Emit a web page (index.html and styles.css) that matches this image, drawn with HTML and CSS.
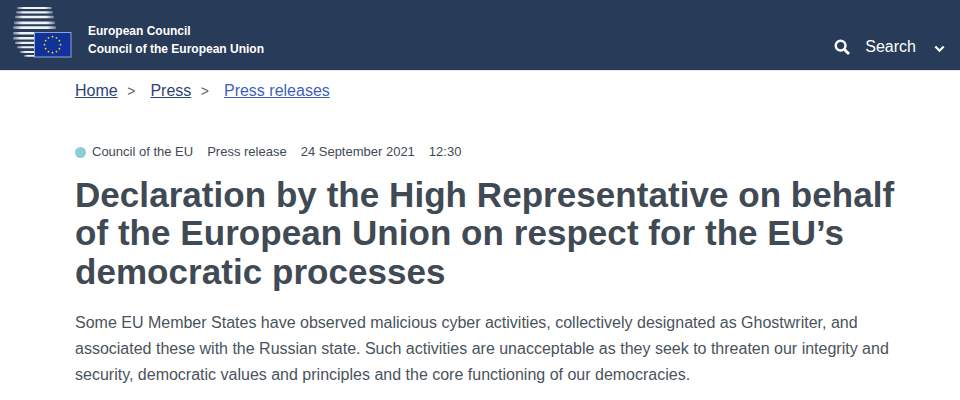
FILE: index.html
```html
<!DOCTYPE html>
<html lang="en">
<head>
    <meta charset="UTF-8">
    <meta name="viewport" content="width=device-width, initial-scale=1.0">
    <title>Declaration by the High Representative</title>
    <link rel="stylesheet" href="styles.css">
</head>
<body>

    <header class="site-header">
        <div class="brand">
            <svg class="brand-logo" width="75" height="60" viewBox="0 0 75 60">
                <defs>
                    <linearGradient id="stripe">
                        <stop offset="0" stop-color="#eef1f5" stop-opacity="0.35"/>
                        <stop offset="0.2" stop-color="#eef1f5"/>
                        <stop offset="0.8" stop-color="#eef1f5"/>
                        <stop offset="1" stop-color="#eef1f5" stop-opacity="0.35"/>
                    </linearGradient>
                    <linearGradient id="stripe-left">
                        <stop offset="0" stop-color="#eef1f5" stop-opacity="0.4"/>
                        <stop offset="0.35" stop-color="#eef1f5"/>
                    </linearGradient>
                </defs>
                <g fill="url(#stripe)">
                    <rect x="17" y="7" width="35" height="2" rx="1"/>
                    <rect x="16" y="11.2" width="37" height="2.2" rx="1"/>
                    <rect x="15" y="15.8" width="39" height="2.4" rx="1"/>
                    <rect x="14" y="21.6" width="41" height="2.6" rx="1"/>
                    <rect x="13" y="26.2" width="43" height="2.8" rx="1"/>
                </g>
                <g fill="url(#stripe-left)">
                    <rect x="13" y="32" width="22" height="2.4" rx="1"/>
                    <rect x="13" y="37" width="22" height="2.4" rx="1"/>
                    <rect x="15" y="41.8" width="20" height="2.2" rx="1"/>
                    <rect x="17" y="46.2" width="18" height="2" rx="1"/>
                    <rect x="20" y="51" width="15" height="2" rx="1"/>
                    <rect x="24" y="55" width="11" height="1.8" rx="0.9"/>
                </g>
                <rect x="34.5" y="32.5" width="36.5" height="24.5" fill="#10329a" stroke="#8fa6d4" stroke-width="1"/>
                <g fill="#f4d90a">
                    <circle cx="52.5" cy="36.7" r="0.9"/>
                    <circle cx="56.5" cy="37.8" r="0.9"/>
                    <circle cx="59.4" cy="40.7" r="0.9"/>
                    <circle cx="60.5" cy="44.7" r="0.9"/>
                    <circle cx="59.4" cy="48.7" r="0.9"/>
                    <circle cx="56.5" cy="51.6" r="0.9"/>
                    <circle cx="52.5" cy="52.7" r="0.9"/>
                    <circle cx="48.5" cy="51.6" r="0.9"/>
                    <circle cx="45.6" cy="48.7" r="0.9"/>
                    <circle cx="44.5" cy="44.7" r="0.9"/>
                    <circle cx="45.6" cy="40.7" r="0.9"/>
                    <circle cx="48.5" cy="37.8" r="0.9"/>
                </g>
            </svg>
            <div class="brand-name">
                <span>European Council</span>
                <span>Council of the European Union</span>
            </div>
        </div>
        <div class="search-box">
            <svg class="search-icon" width="16" height="16" viewBox="0 0 16 16">
                <circle cx="6.6" cy="6.6" r="4.9" fill="none" stroke="#fff" stroke-width="2.4"/>
                <line x1="10.4" y1="10.4" x2="15" y2="15" stroke="#fff" stroke-width="2.8"/>
            </svg>
            <span class="search-label">Search</span>
            <svg class="search-arrow" width="11" height="8" viewBox="0 0 11 8">
                <polyline points="1.3,1.5 5.5,5.7 9.7,1.5" fill="none" stroke="#fff" stroke-width="2.2"/>
            </svg>
        </div>
    </header>

    <main class="page">
        <nav class="breadcrumb">
            <a href="#">Home</a>
            <span class="sep">&gt;</span>
            <a href="#">Press</a>
            <span class="sep">&gt;</span>
            <a href="#" class="current">Press releases</a>
        </nav>

        <div class="meta">
            <span class="dot"></span>
            <span class="meta-source">Council of the EU</span>
            <span>Press release</span>
            <span>24 September 2021</span>
            <span>12:30</span>
        </div>

        <h1>Declaration by the High Representative on behalf of the European Union on respect for the EU’s democratic processes</h1>

        <p class="lead">Some EU Member States have observed malicious cyber activities, collectively designated as Ghostwriter, and associated these with the Russian state. Such activities are unacceptable as they seek to threaten our integrity and security, democratic values and principles and the core functioning of our democracies.</p>
    </main>

</body>
</html>
```

FILE: styles.css
```css
body {
    font-family: "Liberation Sans", Arial, sans-serif;
    margin: 0;
    padding: 0;
    background-color: #fff;
    color: #3f4a54;
    overflow: hidden;
}
.site-header {
    display: flex;
    align-items: flex-start;
    justify-content: space-between;
    height: 70px;
    background-color: #283b58;
    border-bottom: 1px solid #e3e7ef;
}
.brand {
    display: flex;
    align-items: flex-start;
}
.brand-logo {
    display: block;
    margin-right: 13px;
}
.brand-name {
    display: flex;
    flex-direction: column;
    gap: 3px;
    padding-top: 24px;
    color: #fff;
    font-size: 12px;
    font-weight: bold;
    line-height: 15px;
}
.search-box {
    display: flex;
    align-items: center;
    color: #fff;
    font-size: 16px;
    margin-right: 15px;
    padding-top: 38px;
}
.search-label {
    margin-left: 15px;
    margin-right: 18px;
}
.search-arrow {
    margin-top: 4px;
}
.page {
    padding: 0 60px 0 75px;
}
.breadcrumb {
    display: flex;
    align-items: center;
    font-size: 16px;
    line-height: 20px;
    padding-top: 10px;
}
.breadcrumb a {
    color: #2b4475;
}
.breadcrumb a.current {
    color: #3f5fc0;
}
.sep {
    margin: 0 15px 0 9.5px;
    color: #5a6570;
    font-size: 14px;
}
.meta {
    display: flex;
    align-items: center;
    font-size: 13px;
    line-height: 16px;
    margin-top: 43px;
    gap: 14px;
}
.dot {
    width: 11px;
    height: 11px;
    border-radius: 50%;
    background-color: #8acfd6;
    margin-right: -8px;
}
h1 {
    margin: 15.5px 0 0;
    font-size: 35px;
    line-height: 38.5px;
    letter-spacing: 0.05px;
    font-weight: bold;
    color: #3f4a54;
}
.lead {
    margin: 18.5px 0 0;
    font-size: 16px;
    line-height: 26px;
    color: #4a535c;
}
```
